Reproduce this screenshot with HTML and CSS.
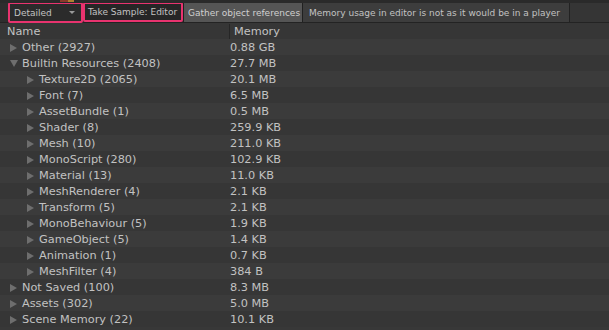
FILE: index.html
```html
<!DOCTYPE html>
<html>
<head>
<meta charset="utf-8">
<link rel="stylesheet" href="styles.css">
</head>
<body>
<div class="app">
  <div class="topstrip"><span class="blip b1"></span><span class="blip b2"></span></div>
  <div class="toolbar">
    <div class="hl hl-drop">
      <div class="dropdown"><span>Detailed</span><span class="caret"></span></div>
    </div>
    <div class="hl hl-btn">
      <div class="btn btn-dark">Take Sample: Editor</div>
    </div>
    <div class="btn btn-light">Gather object references</div>
    <div class="btn btn-info">Memory usage in editor is not as it would be in a player</div>
    <div class="fill"></div>
  </div>
  <div class="header">
    <div class="col-name">Name</div>
    <div class="col-mem">Memory</div>
  </div>
  <div class="rows">
    <div class="row"><div class="col-name l0"><span class="tri"></span>Other (2927)</div><div class="col-mem">0.88 GB</div></div>
    <div class="row"><div class="col-name l0"><span class="tri open"></span>Builtin Resources (2408)</div><div class="col-mem">27.7 MB</div></div>
    <div class="row"><div class="col-name l1"><span class="tri"></span>Texture2D (2065)</div><div class="col-mem">20.1 MB</div></div>
    <div class="row"><div class="col-name l1"><span class="tri"></span>Font (7)</div><div class="col-mem">6.5 MB</div></div>
    <div class="row"><div class="col-name l1"><span class="tri"></span>AssetBundle (1)</div><div class="col-mem">0.5 MB</div></div>
    <div class="row"><div class="col-name l1"><span class="tri"></span>Shader (8)</div><div class="col-mem">259.9 KB</div></div>
    <div class="row"><div class="col-name l1"><span class="tri"></span>Mesh (10)</div><div class="col-mem">211.0 KB</div></div>
    <div class="row"><div class="col-name l1"><span class="tri"></span>MonoScript (280)</div><div class="col-mem">102.9 KB</div></div>
    <div class="row"><div class="col-name l1"><span class="tri"></span>Material (13)</div><div class="col-mem">11.0 KB</div></div>
    <div class="row"><div class="col-name l1"><span class="tri"></span>MeshRenderer (4)</div><div class="col-mem">2.1 KB</div></div>
    <div class="row"><div class="col-name l1"><span class="tri"></span>Transform (5)</div><div class="col-mem">2.1 KB</div></div>
    <div class="row"><div class="col-name l1"><span class="tri"></span>MonoBehaviour (5)</div><div class="col-mem">1.9 KB</div></div>
    <div class="row"><div class="col-name l1"><span class="tri"></span>GameObject (5)</div><div class="col-mem">1.4 KB</div></div>
    <div class="row"><div class="col-name l1"><span class="tri"></span>Animation (1)</div><div class="col-mem">0.7 KB</div></div>
    <div class="row"><div class="col-name l1"><span class="tri"></span>MeshFilter (4)</div><div class="col-mem">384 B</div></div>
    <div class="row"><div class="col-name l0"><span class="tri"></span>Not Saved (100)</div><div class="col-mem">8.3 MB</div></div>
    <div class="row"><div class="col-name l0"><span class="tri"></span>Assets (302)</div><div class="col-mem">5.0 MB</div></div>
    <div class="row"><div class="col-name l0"><span class="tri"></span>Scene Memory (22)</div><div class="col-mem">10.1 KB</div></div>
  </div>
</div>
</body>
</html>
```
FILE: styles.css
```css
* { box-sizing: border-box; }
html, body { margin: 0; padding: 0; background: #383838; }
body { width: 609px; height: 330px; overflow: hidden; font-family: "DejaVu Sans", sans-serif; font-size: 11.3px; color: #c2c2c2; }
.app { display: flex; flex-direction: column; width: 609px; }
.topstrip { height: 3px; background: #2a2a2a; position: relative; }
.blip { position: absolute; top: 0; height: 2px; }
.b1 { left: 60px; width: 8px; background: #8a3a2a; }
.b2 { left: 68px; width: 6px; background: #b08030; }
.toolbar { display: flex; align-items: stretch; height: 20px; background: #2e2e2e; border-bottom: 1px solid #232323; padding-left: 8px; font-size: 9px; }
.hl { border: 2px solid #e8336f; border-radius: 2px; display: flex; }
.hl-drop { width: 75px; height: 21px; margin-top: -1px; }
.hl-btn { width: 100px; height: 20px; margin-top: -1px; }
.dropdown { flex: 1; display: flex; align-items: center; justify-content: space-between; padding: 0 4px 0 4px; background: #2b2b2b; }
.caret { width: 0; height: 0; border-left: 3px solid transparent; border-right: 3px solid transparent; border-top: 3px solid #9a9a9a; margin-right: 2px; }
.btn { display: flex; align-items: center; padding: 0 4px; white-space: nowrap; }
.btn-dark { flex: 1; background: #262626; padding: 0 3px; }
.btn-light { background: #555555; border-left: 1px solid #202020; border-right: 1px solid #202020; color: #d0d0d0; width: 120px; }
.btn-info { background: #3d3d3d; border-right: 1px solid #222; padding: 0 6px; width: 267px; }
.fill { flex: 1; background: #353535; }
.header { display: flex; height: 16px; background: #363636; align-items: center; padding-top: 1px; }
.header .col-name { width: 230px; padding-left: 7px; border-right: 1px solid #262626; height: 100%; display: flex; align-items: center; }
.header .col-mem { padding-left: 4px; }
.rows { display: flex; flex-direction: column; }
.row { display: flex; height: 16px; align-items: center; background: #3b3b3b; padding-top: 1px; }
.row:nth-child(even) { background: #363636; }
.col-name { width: 230px; display: flex; align-items: center; white-space: nowrap; }
.col-mem { padding-left: 0; }
.l0 { padding-left: 10px; }
.l1 { padding-left: 27px; }
.tri { width: 0; height: 0; border-top: 4px solid transparent; border-bottom: 4px solid transparent; border-left: 7px solid #6e6e6e; margin-right: 5px; }
.tri.open { border-left: 4px solid transparent; border-right: 4px solid transparent; border-top: 7px solid #6e6e6e; border-bottom: 0; margin-right: 4px; }
```
